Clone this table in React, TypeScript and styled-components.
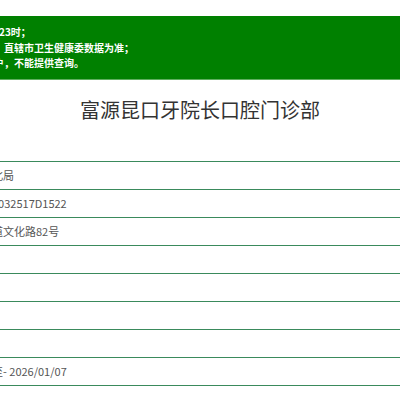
import React from "react";
import styled, { createGlobalStyle } from "styled-components";

const GlobalStyle = createGlobalStyle`
  html, body {
    margin: 0;
    padding: 0;
    background: #ffffff;
  }
  body {
    font-family: "Noto Sans CJK SC", "Noto Sans", sans-serif;
  }
`;

const Page = styled.div`
  width: 100%;
  overflow: hidden;
  padding-top: 16px;
  background: #ffffff;
`;

const Centered = styled.div`
  display: flex;
  justify-content: center;
`;

const Wide = styled.div`
  flex: none;
  width: 600px;
`;

const Banner = styled.div`
  background: #008000;
  border-bottom: 1px solid #5fae5f;
`;

const Notice = styled.div`
  padding: 8px 0 8px 24px;
  color: #ffffff;
  font-size: 10px;
  font-weight: bold;
  line-height: 15.5px;
  white-space: nowrap;
`;

const Title = styled.h1`
  margin: 15px 0 36px;
  font-size: 20px;
  line-height: 30px;
  font-weight: normal;
  color: #333333;
  text-align: center;
  white-space: nowrap;
`;

const Table = styled.div`
  border-top: 1px solid #3a8a5c;
`;

const Row = styled.div`
  display: grid;
  grid-template-columns: 80px 1fr;
  height: 27px;
  border-bottom: 1px solid #3a8a5c;
  font-size: 11px;
  line-height: 27px;
  color: #555555;
  white-space: nowrap;
`;

const Label = styled.div`
  padding-left: 8px;
  color: #333333;
`;

const Value = styled.div`
  padding-left: 12px;
`;

const notices = [
  "数据截至当日12:23时；",
  "以各省、自治区、直辖市卫生健康委数据为准；",
  "非本系统注册用户，不能提供查询。",
];

const rows: [string, string][] = [
  ["登记机关", "北局"],
  ["登记号", "3032517D1522"],
  ["地址", "道文化路82号"],
  ["法定代表人", ""],
  ["主要负责人", ""],
  ["诊疗科目", ""],
  ["床位", ""],
  ["有效期限", "至- 2026/01/07"],
  ["状态", ""],
];

export default function App() {
  return (
    <>
      <GlobalStyle />
      <Page>
        <Banner>
          <Centered>
            <Wide>
              <Notice>
                {notices.map((n) => (
                  <div key={n}>{n}</div>
                ))}
              </Notice>
            </Wide>
          </Centered>
        </Banner>
        <Centered>
          <Wide>
            <Title>富源昆口牙院长口腔门诊部</Title>
            <Table>
              {rows.map(([label, value]) => (
                <Row key={label}>
                  <Label>{label}</Label>
                  <Value>{value}</Value>
                </Row>
              ))}
            </Table>
          </Wide>
        </Centered>
      </Page>
    </>
  );
}
